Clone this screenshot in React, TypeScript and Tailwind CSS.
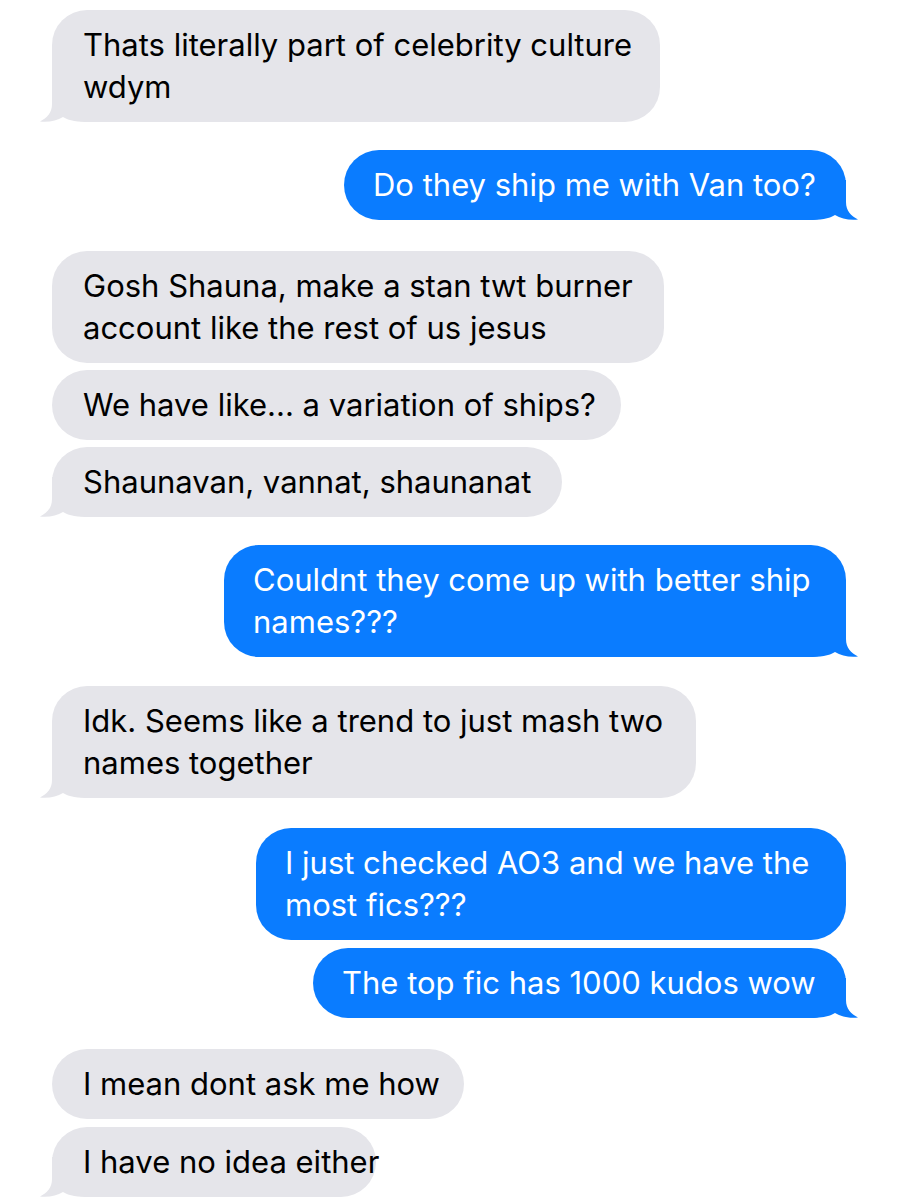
import React from "react";

type Msg = {
  side: "l" | "r";
  lines: string[];
  w: number;
  mt: number;
  tail: boolean;
};

const msgs: Msg[] = [
  { side: "l", lines: ["Thats literally part of celebrity culture", "wdym"], w: 608, mt: 10, tail: true },
  { side: "r", lines: ["Do they ship me with Van too?"], w: 502, mt: 28, tail: true },
  { side: "l", lines: ["Gosh Shauna, make a stan twt burner", "account like the rest of us jesus"], w: 612, mt: 31, tail: false },
  { side: "l", lines: ["We have like... a variation of ships?"], w: 569, mt: 7, tail: false },
  { side: "l", lines: ["Shaunavan, vannat, shaunanat"], w: 510, mt: 7, tail: true },
  { side: "r", lines: ["Couldnt they come up with better ship", "names???"], w: 622, mt: 28, tail: true },
  { side: "l", lines: ["Idk. Seems like a trend to just mash two", "names together"], w: 644, mt: 29, tail: true },
  { side: "r", lines: ["I just checked AO3 and we have the", "most fics???"], w: 590, mt: 30, tail: false },
  { side: "r", lines: ["The top fic has 1000 kudos wow"], w: 533, mt: 8, tail: true },
  { side: "l", lines: ["I mean dont ask me how"], w: 412, mt: 31, tail: false },
  { side: "l", lines: ["I have no idea either"], w: 324, mt: 8, tail: true },
];

function LeftTail() {
  return (
    <svg
      className="absolute bottom-0 left-[-12px]"
      width="50"
      height="40"
      viewBox="0 0 50 40"
    >
      <path
        d="M12 0 L12 22 C12 31 7 36 0 39.5 C9 40.5 17 38.5 23 35 C29 39 38 40 50 40 L50 0 Z"
        fill="#e5e5ea"
      />
    </svg>
  );
}

function RightTail() {
  return (
    <svg
      className="absolute bottom-0 right-[-12px]"
      width="50"
      height="40"
      viewBox="0 0 50 40"
    >
      <path
        d="M38 0 L38 22 C38 31 43 36 50 39.5 C41 40.5 33 38.5 27 35 C21 39 12 40 0 40 L0 0 Z"
        fill="#0a7cff"
      />
    </svg>
  );
}

function Bubble({ m }: { m: Msg }) {
  const isLeft = m.side === "l";
  return (
    <div
      className={isLeft ? "flex justify-start" : "flex justify-end"}
      style={{ marginTop: m.mt }}
    >
      <div
        className={
          isLeft
            ? "relative rounded-[35px] bg-[#e5e5ea] px-[31px] py-[14px] text-black"
            : "relative rounded-[35px] bg-[#0a7cff] px-[29px] py-[14px] text-white"
        }
        style={{ width: m.w }}
      >
        {m.tail && (isLeft ? <LeftTail /> : <RightTail />)}
        <div className="relative whitespace-nowrap text-[31px] leading-[42px]">
          {m.lines.map((l, i) => (
            <div key={i}>{l}</div>
          ))}
        </div>
      </div>
    </div>
  );
}

export default function App() {
  return (
    <div
      className="h-[1200px] w-[898px] overflow-hidden bg-white px-[52px] pt-0"
      style={{ fontFamily: "Inter, 'Noto Sans', sans-serif" }}
    >
      <div className="flex flex-col">
        {msgs.map((m, i) => (
          <Bubble key={i} m={m} />
        ))}
      </div>
    </div>
  );
}
